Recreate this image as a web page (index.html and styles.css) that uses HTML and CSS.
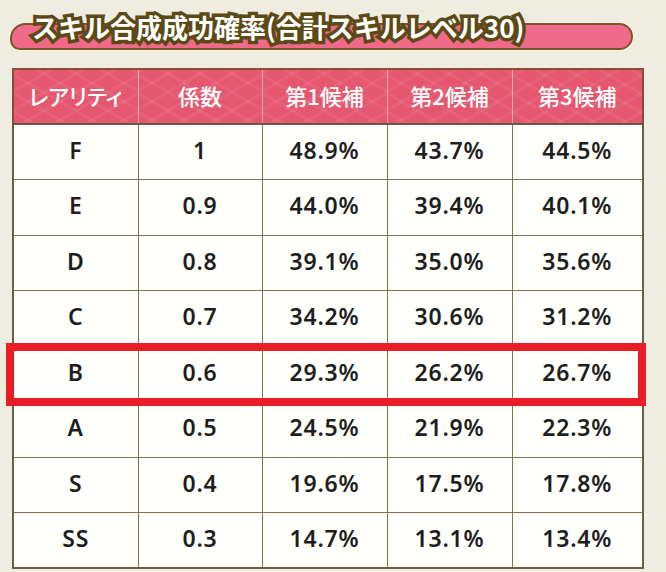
FILE: index.html
```html
<!DOCTYPE html>
<html lang="ja">
<head>
<meta charset="utf-8">
<link rel="stylesheet" href="styles.css">
</head>
<body>
<div class="page">
  <div class="banner">
    <span class="banner-text">スキル合成成功確率(合計スキルレベル30)</span>
  </div>
  <div class="table-wrap">
    <table class="rates">
      <colgroup>
        <col class="c1"><col class="c2"><col class="c3"><col class="c4"><col class="c5">
      </colgroup>
      <thead>
        <tr><th>レアリティ</th><th>係数</th><th>第1候補</th><th>第2候補</th><th>第3候補</th></tr>
      </thead>
      <tbody>
        <tr><td>F</td><td>1</td><td>48.9%</td><td>43.7%</td><td>44.5%</td></tr>
        <tr><td>E</td><td>0.9</td><td>44.0%</td><td>39.4%</td><td>40.1%</td></tr>
        <tr><td>D</td><td>0.8</td><td>39.1%</td><td>35.0%</td><td>35.6%</td></tr>
        <tr><td>C</td><td>0.7</td><td>34.2%</td><td>30.6%</td><td>31.2%</td></tr>
        <tr><td>B</td><td>0.6</td><td>29.3%</td><td>26.2%</td><td>26.7%</td></tr>
        <tr><td>A</td><td>0.5</td><td>24.5%</td><td>21.9%</td><td>22.3%</td></tr>
        <tr><td>S</td><td>0.4</td><td>19.6%</td><td>17.5%</td><td>17.8%</td></tr>
        <tr><td>SS</td><td>0.3</td><td>14.7%</td><td>13.1%</td><td>13.4%</td></tr>
      </tbody>
    </table>
    <div class="highlight"></div>
  </div>
</div>
</body>
</html>
```

FILE: styles.css
```css
html, body {
  margin: 0;
  padding: 0;
  background: #efece0;
}

.page {
  width: 666px;
  height: 572px;
  overflow: hidden;
  background: #efece0;
}

.banner {
  margin: 23px 33px 0 10px;
  height: 27px;
  box-sizing: border-box;
  border: 2.5px solid #7d5424;
  border-radius: 16px 14px 14px 10px;
  background: #ef6a89;
  box-shadow: 0 0 0 1px rgba(255, 250, 235, 0.6);
  display: flex;
  align-items: flex-start;
  padding-left: 20px;
}

.banner-text {
  margin-top: -14px;
  font-family: "Noto Sans CJK JP", "Noto Sans", sans-serif;
  font-weight: 700;
  font-size: 26px;
  line-height: 32px;
  letter-spacing: 0;
  color: #ffffff;
  -webkit-text-stroke: 7px #5b4a16;
  paint-order: stroke fill;
  white-space: nowrap;
}

.table-wrap {
  position: relative;
  margin: 18px 0 0 12px;
  width: 630px;
}

.rates {
  width: 630px;
  border-collapse: collapse;
  table-layout: fixed;
  border: 2px solid #6a6040;
}

.c1 { width: 125px; }
.c2 { width: 124px; }
.c3 { width: 125px; }
.c4 { width: 125px; }
.c5 { width: 131px; }

.rates thead tr {
  height: 55px;
}

.rates th {
  font-family: "Noto Sans CJK JP", "Noto Sans", sans-serif;
  font-feature-settings: "palt";
  font-weight: 500;
  font-size: 22px;
  color: #ffffff;
  text-align: center;
  vertical-align: middle;
  padding: 0 0 4px 0;
  border-top: 2px solid #8c4a3a;
  border-bottom: 2px solid #6a5a3c;
  border-left: 1px solid #f3a9b6;
  border-right: 1px solid #f3a9b6;
  background-color: #e4576f;
  background-image:
    repeating-linear-gradient(30deg, rgba(255,255,255,0) 0 8px, rgba(255,255,255,0.06) 8px 11px, rgba(255,255,255,0) 11px 16px),
    repeating-linear-gradient(-30deg, rgba(255,255,255,0) 0 8px, rgba(255,255,255,0.06) 8px 11px, rgba(255,255,255,0) 11px 16px);
}

.rates th:first-child { border-left: 2px solid #8c4a3a; }
.rates th:last-child { border-right: 2px solid #8c4a3a; }

.rates tbody tr {
  height: 55.5px;
}

.rates td {
  font-family: "Noto Sans", "Open Sans", sans-serif;
  font-weight: 600;
  font-size: 23px;
  letter-spacing: 0.8px;
  color: #1e1e1e;
  text-align: center;
  vertical-align: middle;
  padding: 0 0 4px 0;
  background: #fffffb;
  border: 1px solid #807550;
}

.highlight {
  position: absolute;
  left: -6px;
  top: 275px;
  width: 640px;
  height: 63px;
  box-sizing: border-box;
  border: 8px solid #e81d25;
  pointer-events: none;
}
```
